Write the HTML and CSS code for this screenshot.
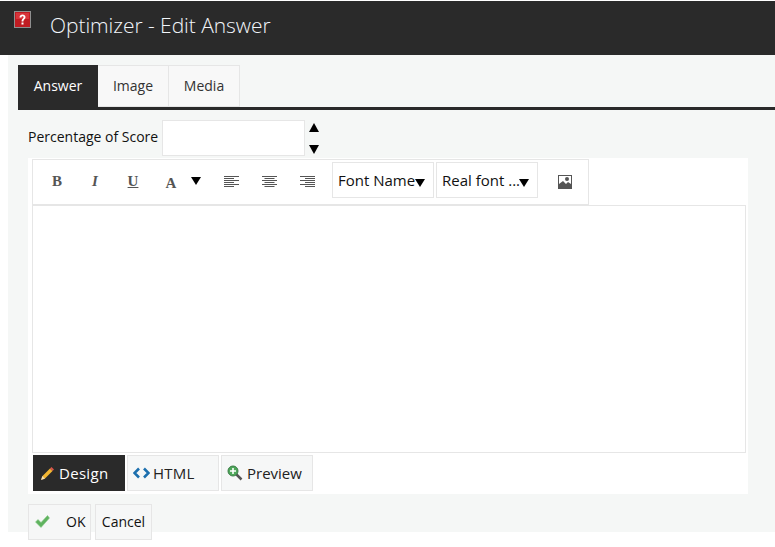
FILE: index.html
```html
<!DOCTYPE html>
<html lang="en">
<head>
<meta charset="utf-8">
<title>Optimizer - Edit Answer</title>
<link rel="stylesheet" href="styles.css">
</head>
<body>
<header class="titlebar">
  <svg class="help-icon" width="17" height="17" viewBox="0 0 17 17"><rect x=".5" y=".5" width="16" height="16" fill="#c01c22" stroke="#8f8f8f"/><rect x="2" y="2" width="13" height="6" fill="#d8343a"/><path d="M5.500 6.500C5.500 2.500 11.500 2.500 11.500 6.200 11.500 8.200 9.400 8.200 9.400 10.500H7.600C7.600 7.500 9.600 7.500 9.600 6.200 9.600 4.800 7.500 4.800 7.400 6.500z M7.500 11.500h2v2h-2z" fill="#fff"/></svg>
  <h1 class="title">Optimizer - Edit Answer</h1>
</header>
<main class="panel">
  <nav class="tabs">
    <a class="tab tab-active tab-answer">Answer</a>
    <a class="tab tab-image">Image</a>
    <a class="tab tab-media">Media</a>
  </nav>
  <div class="score-row">
    <label class="score-label">Percentage of Score</label>
    <div class="score-input"></div>
    <div class="spinner">
      <svg width="10" height="9" viewBox="0 0 10 9"><path d="M5 0l5 9H0z" fill="#000"/></svg>
      <svg width="10" height="9" viewBox="0 0 10 9"><path d="M0 0h10L5 9z" fill="#000"/></svg>
    </div>
  </div>
  <section class="editor">
    <div class="toolbar">
      <span class="tool glyph">B</span>
      <span class="tool glyph glyph-i">I</span>
      <span class="tool glyph glyph-u">U</span>
      <span class="tool glyph tool-color">A</span>
      <span class="tool-arrow"><svg width="10" height="8" viewBox="0 0 10 8"><path d="M0 0h10L5 8z" fill="#000"/></svg></span>
      <span class="tool tool-align"><svg width="15" height="11" viewBox="0 0 15 11"><path d="M0 .5h15M0 2.500h10M0 4.500h15M0 6.500h10M0 8.500h15M0 10.500h10" stroke="#555"/></svg></span>
      <span class="tool tool-align"><svg width="15" height="11" viewBox="0 0 15 11"><path d="M0 .5h15M2.500 2.500h10M0 4.500h15M2.500 6.500h10M0 8.500h15M2.500 10.500h10" stroke="#555"/></svg></span>
      <span class="tool tool-align tool-last"><svg width="15" height="11" viewBox="0 0 15 11"><path d="M0 .5h15M5 2.500h10M0 4.500h15M5 6.500h10M0 8.500h15M5 10.500h10" stroke="#555"/></svg></span>
      <span class="select select-name">Font Name<svg class="select-arrow" width="10" height="8" viewBox="0 0 10 8"><path d="M0 0h10L5 8z" fill="#000"/></svg></span>
      <span class="select select-size">Real font ...<svg class="select-arrow" width="10" height="8" viewBox="0 0 10 8"><path d="M0 0h10L5 8z" fill="#000"/></svg></span>
      <span class="tool tool-picture"><svg width="14" height="14" viewBox="0 0 14 14"><path d="M0 0h14v14H0z" fill="#555"/><path d="M1 1h12v8l-3-2-2 2-3-3-4 3z" fill="#fff"/><circle cx="9" cy="4" r="2" fill="#555"/></svg></span>
    </div>
    <div class="editing-area"></div>
    <div class="modes">
      <a class="mode mode-active mode-design"><svg width="15" height="15" viewBox="0 0 15 15"><path d="M1.500 13.500l1-3.500 7.500-7.500 2.500 2.500L5 12.500z" fill="#f2b632"/><path d="M1 14l1.300-4 2.700 2.700z" fill="#f6dfb5"/><path d="M10 2.500l1.500-1.500 2.500 2.500L12.500 5z" fill="#d9574a"/></svg>Design</a>
      <a class="mode mode-html"><svg width="17" height="12" viewBox="0 0 17 12"><path d="M6 1.500L1.500 6 6 10.500M11 1.500L15.500 6 11 10.500" fill="none" stroke="#1c6fae" stroke-width="2.600"/></svg>HTML</a>
      <a class="mode mode-preview"><svg width="16" height="16" viewBox="0 0 16 16"><path d="M9 9l5.500 5.500" stroke="#555" stroke-width="2.500"/><circle cx="6" cy="6" r="5" fill="#4ea75a" stroke="#3b7d46"/><path d="M6 3v6M3 6h6" stroke="#fff" stroke-width="1.600"/></svg>Preview</a>
    </div>
  </section>
  <div class="actions">
    <button class="btn btn-ok"><svg width="15" height="13" viewBox="0 0 15 13"><path d="M.5 7l2.500-2.500 3 3L12.500.5 14.500 3 6 12.500z" fill="#5fb35f" stroke="#8cc98c" stroke-width=".6"/></svg><span>OK</span></button>
    <button class="btn btn-cancel">Cancel</button>
  </div>
</main>
</body>
</html>
```

FILE: styles.css
```css
* { box-sizing: border-box; }
html, body { margin: 0; padding: 0; background: #fff; }
body {
  padding-top: 1px;
  height: 547px;
  overflow: hidden;
  font-family: "Open Sans", "Noto Sans", sans-serif;
  font-size: 14px;
  color: #111;
}
.titlebar {
  height: 54px;
  background: #2a2a2a;
  display: flex;
  align-items: flex-start;
  padding-left: 14px;
}
.help-icon { margin-top: 10px; flex: none; }
.title {
  margin: 0 0 0 19px;
  font-weight: 300;
  font-size: 21px;
  line-height: 48px;
  color: #f2f6fa;
  letter-spacing: -.05px;
}
.panel {
  margin-left: 8px;
  height: 477px;
  background: #f5f7f6;
  padding: 10px 0 0 10px;
}
.tabs {
  display: flex;
  height: 45px;
  border-bottom: 3px solid #2a2a2a;
  align-items: stretch;
}
.tab {
  height: 42px;
  display: flex;
  align-items: center;
  justify-content: center;
  background: #f8f8f8;
  border: 1px solid #e6e6e6;
  border-left: 0;
  color: #333;
  font-size: 14px;
  padding-bottom: 2px;
}
.tab-answer { width: 80px; }
.tab-image { width: 71px; }
.tab-media { width: 71px; }
.tab-active { background: #2a2a2a; color: #fff; border: 0; }
.score-row {
  display: flex;
  align-items: flex-start;
  margin: 10px 0 0 10px;
  height: 38px;
}
.score-label { font-size: 14px; line-height: 34px; width: 134px; white-space: nowrap; }
.score-input {
  width: 143px;
  height: 36px;
  background: #fff;
  border: 1px solid #e6e6e6;
}
.spinner {
  display: flex;
  flex-direction: column;
  gap: 13px;
  margin: 3px 0 0 4px;
}
.spinner svg { display: block; }
.editor {
  width: 720px;
  margin-left: 10px;
  height: 336px;
  background: #fff;
  padding: 1px 2px 0 4px;
}
.toolbar {
  width: 557px;
  height: 46px;
  border: 1px solid #e6e6e6;
  display: flex;
  align-items: flex-start;
  padding: 2px 0 0 17px;
}
.tool {
  width: 14px;
  height: 16px;
  margin: 11px 24px 0 0;
  display: flex;
  align-items: center;
  justify-content: center;
  flex: none;
}
.tool-color { margin-right: 13px; margin-top: 13px; }
.tool-arrow { width: 10px; height: 8px; margin: 15px 23px 0 0; flex: none; display: flex; }
.tool-align { width: 15px; margin-right: 23px; }
.tool-last { margin-right: 17px; }
.glyph { font: bold 15px/16px "Liberation Serif", serif; color: #555; }
.glyph-i { font-style: italic; }
.glyph-u { text-decoration: underline; }
.select {
  position: relative;
  height: 36px;
  border: 1px solid #e6e6e6;
  background: #fff;
  margin-right: 2px;
  padding-left: 5px;
  font-size: 15px;
  line-height: 35px;
  color: #111;
  white-space: nowrap;
  flex: none;
}
.select-name { width: 102px; }
.select-size { width: 102px; }
.select-arrow { position: absolute; right: 8px; top: 16px; }
.tool-picture { margin: 12px 0 0 18px; }
.editing-area {
  width: 714px;
  height: 248px;
  background: #fff;
  border: 1px solid #e6e6e6;
}
.modes {
  display: flex;
  gap: 2px;
  margin: 2px 0 0 1px;
}
.mode {
  height: 36px;
  display: flex;
  align-items: center;
  background: #f6f7f7;
  border: 1px solid #e6e6e6;
  color: #222;
  font-size: 15px;
}
.mode svg { flex: none; }
.mode-design { width: 92px; padding-left: 7px; background: #2a2a2a; border: 0; color: #fff; gap: 4px; letter-spacing: .3px; }
.mode-html { width: 92px; padding-left: 5px; gap: 3px; letter-spacing: .2px; }
.mode-preview { width: 92px; padding-left: 5px; gap: 4px; }
.actions {
  display: flex;
  gap: 4px;
  margin: 10px 0 0 10px;
}
.btn {
  height: 36px;
  background: #f6f7f7;
  border: 1px solid #e6e6e6;
  font: inherit;
  font-size: 14px;
  color: #111;
  display: flex;
  align-items: center;
  padding: 0 0 2px;
}
.btn-ok { width: 63px; padding-left: 6px; gap: 16px; }
.btn-cancel { width: 57px; justify-content: center; }
```
